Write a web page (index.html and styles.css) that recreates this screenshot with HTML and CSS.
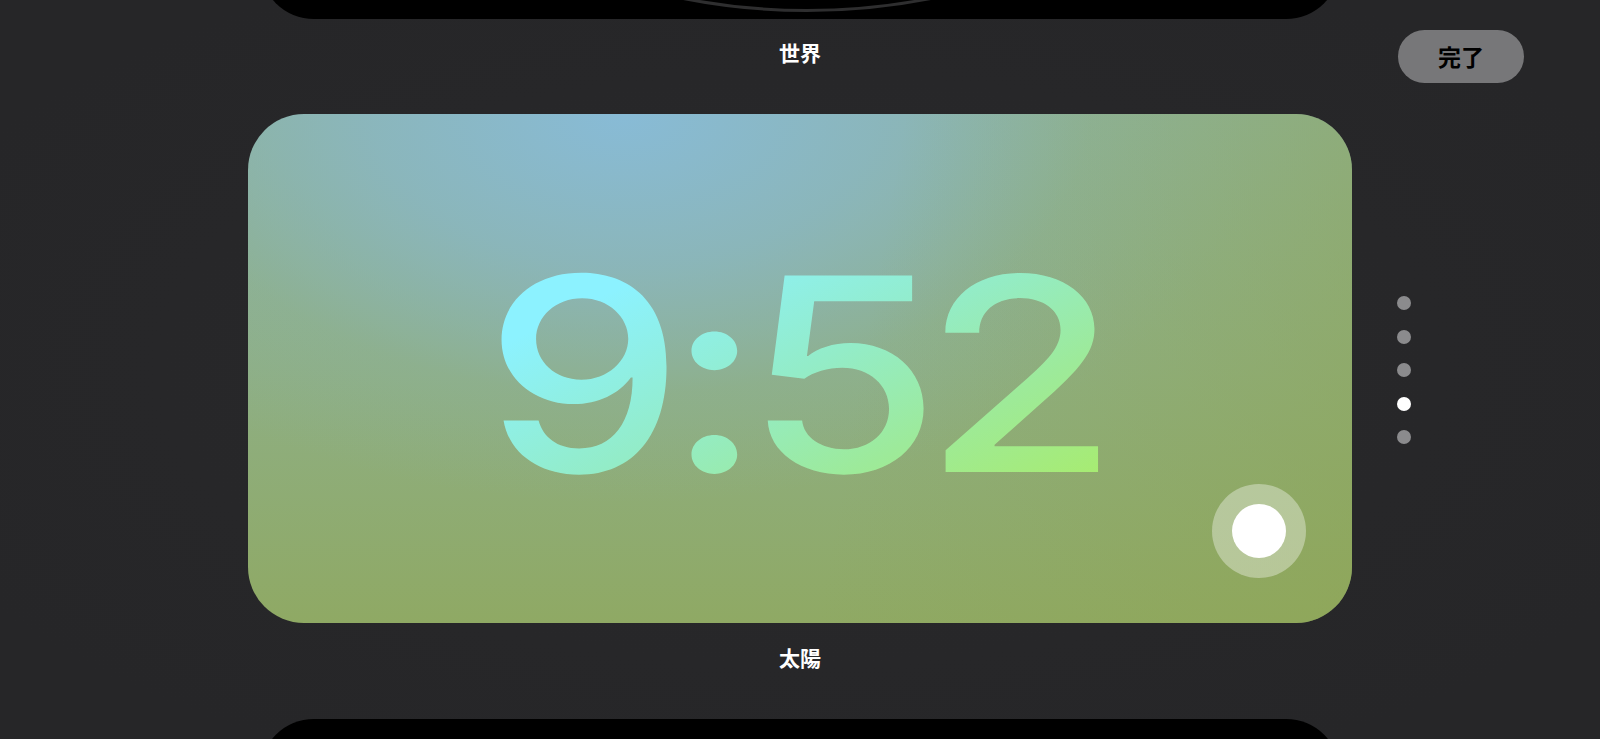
FILE: index.html
```html
<!DOCTYPE html>
<html lang="ja">
<head>
<meta charset="utf-8">
<title>StandBy</title>
<link rel="stylesheet" href="styles.css">
</head>
<body>
<div class="page">
  <div class="stack">
    <div class="card card-peek">
      <div class="globe-ring"></div>
    </div>
    <div class="label">世界</div>
    <div class="card card-solar">
      <div class="time">9:52</div>
      <div class="record-btn"><span class="record-dot"></span></div>
    </div>
    <div class="label label-second">太陽</div>
    <div class="card card-peek card-next"></div>
  </div>
  <button class="done-btn">完了</button>
  <div class="pager">
    <span class="pager-dot"></span>
    <span class="pager-dot"></span>
    <span class="pager-dot"></span>
    <span class="pager-dot is-active"></span>
    <span class="pager-dot"></span>
  </div>
</div>
</body>
</html>
```

FILE: styles.css
```css
html, body {
  margin: 0;
  padding: 0;
}
body {
  background: #262628;
  width: 1600px;
  height: 739px;
  overflow: hidden;
  font-family: "Noto Sans CJK JP", "Noto Sans", sans-serif;
}
.page {
  position: relative;
  width: 1600px;
  height: 739px;
  overflow: hidden;
  background: radial-gradient(ellipse 60% 60% at 50% 50%, #29292b 0%, #262628 100%);
}
.stack {
  display: flex;
  flex-direction: column;
  align-items: center;
  margin-top: -479px;
}
.card {
  position: relative;
  overflow: hidden;
}
.card-peek {
  width: 1080px;
  height: 498px;
  background: #000;
  border-radius: 54px;
}
.globe-ring {
  position: absolute;
  left: -93px;
  top: -789px;
  width: 1280px;
  height: 1280px;
  border-radius: 50%;
  border: 3px solid #2e2e2f;
  box-sizing: border-box;
}
.label {
  margin-top: 23px;
  height: 21px;
  line-height: 21px;
  font-size: 21px;
  font-weight: 700;
  color: #fff;
}
.label-second {
  margin-top: 24px;
}
.card-solar {
  margin-top: 51px;
  width: 1104px;
  height: 509px;
  border-radius: 56px;
  display: flex;
  align-items: center;
  justify-content: center;
  box-sizing: border-box;
  padding-top: 10px;
  background:
    radial-gradient(ellipse 65% 85% at 34% 0%, rgba(136, 187, 214, 1) 0%, rgba(138, 183, 196, 0.8) 35%, rgba(140, 178, 165, 0.3) 65%, rgba(140, 176, 160, 0) 90%),
    linear-gradient(180deg, #8db39e 0%, #8eaf84 50%, #8fa964 100%);
}
.card-solar::after {
  content: "";
  position: absolute;
  inset: 0;
  background: linear-gradient(100deg, rgba(143, 168, 110, 0) 55%, rgba(143, 165, 82, 0.55) 100%);
  pointer-events: none;
}
.card-next {
  margin-top: 51px;
}
.time {
  position: relative;
  z-index: 1;
  margin-right: 14px;
  font-family: Inter, "Noto Sans", sans-serif;
  font-size: 270px;
  font-weight: 500;
  line-height: 1;
  letter-spacing: -15px;
  transform: scaleX(1.175);
  background: linear-gradient(150deg, #8cf2ff 20%, #93ecc8 50%, #9dea9a 72%, #aaec66 100%);
  -webkit-background-clip: text;
  background-clip: text;
  color: transparent;
}
.record-btn {
  position: absolute;
  z-index: 1;
  left: 964px;
  top: 370px;
  width: 94px;
  height: 94px;
  border-radius: 50%;
  background: rgba(255, 255, 255, 0.36);
  display: flex;
  align-items: center;
  justify-content: center;
}
.record-dot {
  width: 54px;
  height: 54px;
  border-radius: 50%;
  background: #fff;
}
.done-btn {
  position: absolute;
  left: 1398px;
  top: 30px;
  width: 126px;
  height: 53px;
  border: none;
  border-radius: 27px;
  background: #777779;
  color: #000;
  font-family: "Noto Sans CJK JP", sans-serif;
  font-size: 23px;
  font-weight: 700;
  line-height: 53px;
  padding: 0;
}
.pager {
  position: absolute;
  left: 1397px;
  top: 296px;
  display: flex;
  flex-direction: column;
  gap: 19.5px;
}
.pager-dot {
  width: 14px;
  height: 14px;
  border-radius: 50%;
  background: #8b8b8d;
}
.pager-dot.is-active {
  background: #fff;
}
```
